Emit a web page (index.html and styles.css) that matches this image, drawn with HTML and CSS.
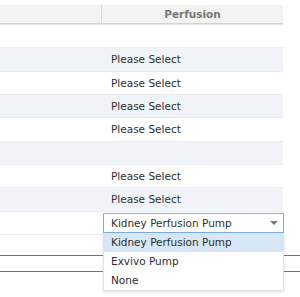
FILE: index.html
```html
<!DOCTYPE html>
<html>
<head>
<meta charset="utf-8">
<link rel="stylesheet" href="styles.css">
</head>
<body>
<div class="page">
  <div class="grid">
    <div class="head">
      <div class="hcell first"></div>
      <div class="hcell">Perfusion</div>
    </div>
    <div class="row"><div class="c1"></div><div class="c2"></div></div>
    <div class="row alt"><div class="c1"></div><div class="c2">Please Select</div></div>
    <div class="row"><div class="c1"></div><div class="c2">Please Select</div></div>
    <div class="row alt"><div class="c1"></div><div class="c2">Please Select</div></div>
    <div class="row"><div class="c1"></div><div class="c2">Please Select</div></div>
    <div class="row alt"><div class="c1"></div><div class="c2"></div></div>
    <div class="row"><div class="c1"></div><div class="c2">Please Select</div></div>
    <div class="row alt"><div class="c1"></div><div class="c2">Please Select</div></div>
    <div class="row edit">
      <div class="c1"></div>
      <div class="sel-cell">
        <div class="select">
          <span class="sel-text">Kidney Perfusion Pump</span>
          <span class="arrow"></span>
        </div>
        <div class="popup">
          <div class="item selected">Kidney Perfusion Pump</div>
          <div class="item">Exvivo Pump</div>
          <div class="item">None</div>
        </div>
      </div>
    </div>
  </div>
  <div class="footer"></div>
</div>
</body>
</html>
```
FILE: styles.css
```css
* { box-sizing: border-box; }
body {
  margin: 0;
  font-family: "DejaVu Sans", Verdana, sans-serif;
  font-size: 10.5px;
  color: #2e2e2e;
  background: #fff;
}
.page { width: 300px; min-height: 297px; padding-top: 5px; }
.grid { width: 283px; }
.head {
  display: grid;
  grid-template-columns: 102px 1fr;
  height: 19px;
  background: #f3f3f3;
  border-bottom: 1px solid #d2d2d2;
  box-shadow: 0 1px 0 #e6e6e6;
  margin-bottom: 1px;
}
.hcell {
  font-weight: bold;
  color: #777;
  text-align: center;
  line-height: 19px;
}
.hcell.first { border-right: 1px solid #dcdcdc; }
.row {
  display: grid;
  grid-template-columns: 102px 1fr;
  height: 23.33px;
  border-bottom: 1px solid #ececec;
  align-items: center;
}
.row.alt { background: #f0f4f8; }
.c2 { padding-left: 9px; }
.edit { align-items: start; }
.sel-cell { position: relative; padding: 1px 0 0 1px; height: 100%; }
.select {
  width: 181px;
  height: 20px;
  border: 1px solid #7ab1e3;
  display: flex;
  align-items: center;
  padding-left: 7px;
  background: #fff;
}
.sel-text { flex: 1; }
.arrow {
  width: 0; height: 0;
  border-left: 4px solid transparent;
  border-right: 4px solid transparent;
  border-top: 4px solid #777;
  margin-right: 5px;
}
.popup {
  position: absolute;
  left: 1px;
  top: 21px;
  width: 181px;
  background: #fff;
  border: 1px solid #e2e2e2;
  border-top: 0;
  box-shadow: 0 1px 3px rgba(0,0,0,.12);
  z-index: 5;
}
.item { height: 19px; line-height: 19px; padding-left: 7px; }
.item.selected { background: #d6e6f5; }
.footer {
  margin-top: 20px;
  height: 17px;
  border-top: 1px solid #4a943c;
  border-bottom: 1px solid #4a943c;
}
```
